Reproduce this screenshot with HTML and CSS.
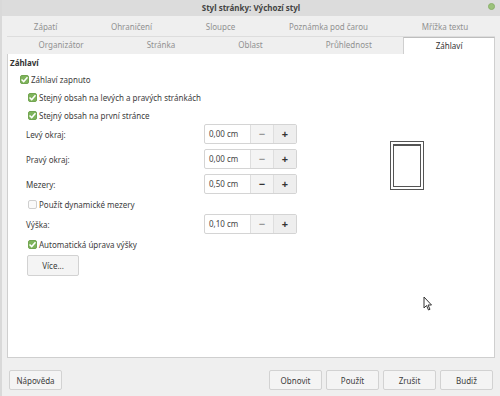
FILE: index.html
```html
<!DOCTYPE html>
<html lang="cs">
<head>
    <meta charset="UTF-8">
    <title>Styl stránky: Výchozí styl</title>
    <link rel="stylesheet" href="styles.css">
</head>
<body>
<div class="window">
    <div class="titlebar">
        Styl stránky: Výchozí styl
        <span class="close-dot"></span>
    </div>

    <div class="tabrow top">
        <div class="tab">Zápatí</div>
        <div class="tab">Ohraničení</div>
        <div class="tab">Sloupce</div>
        <div class="tab">Poznámka pod čarou</div>
        <div class="tab">Mřížka textu</div>
    </div>
    <div class="tabrow">
        <div class="tab">Organizátor</div>
        <div class="tab">Stránka</div>
        <div class="tab">Oblast</div>
        <div class="tab">Průhlednost</div>
        <div class="tab active">Záhlaví</div>
    </div>

    <div class="panel">
        <div class="form">
            <div class="heading">Záhlaví</div>

            <label class="check lvl1"><span class="box on"></span>Záhlaví zapnuto</label>
            <label class="check lvl2"><span class="box on"></span>Stejný obsah na levých a pravých stránkách</label>
            <label class="check lvl2"><span class="box on"></span>Stejný obsah na první stránce</label>

            <div class="field first">
                <span class="label">Levý okraj:</span>
                <div class="spin"><span class="value">0,00 cm</span><span class="btn minus dim">−</span><span class="btn plus">+</span></div>
            </div>
            <div class="field">
                <span class="label">Pravý okraj:</span>
                <div class="spin"><span class="value">0,00 cm</span><span class="btn minus dim">−</span><span class="btn plus">+</span></div>
            </div>
            <div class="field">
                <span class="label">Mezery:</span>
                <div class="spin"><span class="value">0,50 cm</span><span class="btn minus">−</span><span class="btn plus">+</span></div>
            </div>

            <label class="check lvl2 gap"><span class="box"></span>Použít dynamické mezery</label>

            <div class="field tight">
                <span class="label">Výška:</span>
                <div class="spin"><span class="value">0,10 cm</span><span class="btn minus dim">−</span><span class="btn plus">+</span></div>
            </div>

            <label class="check lvl2 gap"><span class="box on"></span>Automatická úprava výšky</label>

            <button class="more">Více...</button>
        </div>

        <div class="preview">
            <div class="page"><div class="page-inner"></div></div>
        </div>

        <svg class="cursor" width="10" height="15" viewBox="0 0 10 15">
            <path d="M1 1 L1 12 L3.5 9.5 L5.5 14 L7 13.3 L5 9 L8.5 9 Z" fill="#fff" stroke="#333" stroke-width="1"/>
        </svg>
    </div>

    <div class="footer">
        <button>Nápověda</button>
        <div class="actions">
            <button>Obnovit</button>
            <button>Použít</button>
            <button>Zrušit</button>
            <button>Budiž</button>
        </div>
    </div>
</div>
</body>
</html>
```

FILE: styles.css
```css
* {
    box-sizing: border-box;
}
body {
    margin: 0;
    font-family: "Noto Sans", sans-serif;
    font-size: 8px;
    color: #3c3c3c;
    background-color: #efefef;
}
.window {
    width: 500px;
    height: 396px;
    display: flex;
    flex-direction: column;
    border-left: 2px solid #d9d9d9;
}
.titlebar {
    position: relative;
    height: 16px;
    line-height: 16px;
    text-align: center;
    font-weight: bold;
    color: #444;
    background-color: #dcdcdc;
}
.close-dot {
    position: absolute;
    right: 5px;
    top: 3px;
    width: 7px;
    height: 7px;
    border-radius: 50%;
    background-color: #9bc27a;
    border: 1px solid #8ab06a;
}
.tabrow {
    display: flex;
    margin: 0 5px 0 5px;
    height: 17px;
    line-height: 16px;
}
.tabrow.top {
    height: 21px;
    line-height: 22px;
    border-bottom: 1px solid #dddddd;
}
.tab {
    flex: 1 1 auto;
    text-align: center;
    color: #919191;
}
.tab.active {
    background-color: #fff;
    color: #333;
    border: 1px solid #cfcfcf;
    border-bottom: none;
    border-top-color: #bdbdbd;
}
.panel {
    position: relative;
    flex: 1;
    display: flex;
    margin: 0 5px 0 5px;
    background-color: #fff;
    border: 1px solid #cfcfcf;
    border-top: none;
}
.form {
    width: 300px;
}
.heading {
    margin-top: 2px;
    padding-left: 2px;
    height: 14px;
    line-height: 14px;
    font-weight: bold;
    color: #333;
}
.check {
    display: flex;
    align-items: center;
    height: 18px;
}
.check.lvl1 {
    padding-left: 12px;
}
.check.lvl2 {
    padding-left: 20px;
}
.check.gap {
    margin-top: 1px;
}
.box {
    width: 9px;
    height: 9px;
    margin-right: 2px;
    border: 1px solid #cfcfcf;
    border-radius: 2px;
    background-color: #fafafa;
}
.box.on {
    border-color: #72a550;
    background: #7fb35c url("data:image/svg+xml;utf8,<svg xmlns='http://www.w3.org/2000/svg' viewBox='0 0 9 9'><path d='M1.5 4.5 L3.7 6.6 L7.5 2.2' fill='none' stroke='white' stroke-width='1.5'/></svg>") center / 9px 9px no-repeat;
}
.field {
    display: flex;
    align-items: center;
    height: 20px;
    margin-top: 5px;
    padding-left: 18px;
}
.field.first {
    margin-top: 0;
}
.field.tight {
    margin-top: 1px;
}
.label {
    width: 178px;
}
.spin {
    display: flex;
    height: 20px;
    border: 1px solid #d4d4d4;
    border-radius: 2px;
}
.spin .value {
    width: 45px;
    padding-left: 4px;
    line-height: 18px;
    color: #444;
}
.spin .btn {
    width: 23px;
    text-align: center;
    line-height: 18px;
    font-size: 11px;
    font-weight: bold;
    color: #333;
    border-left: 1px solid #dedede;
}
.spin .minus {
    background-color: #f4f4f4;
}
.spin .minus.dim {
    color: #999;
}
.spin .plus {
    background-color: #eeeeee;
}
button {
    font-family: "Noto Sans", sans-serif;
    font-size: 8px;
    color: #3c3c3c;
    background-color: #f4f4f4;
    border: 1px solid #d2d2d2;
    border-radius: 2px;
    height: 20px;
    width: 53px;
    padding: 0;
}
.more {
    margin: 2px 0 0 19px;
    width: 52px;
    height: 21px;
}
.preview {
    flex: 1;
    padding: 87px 0 0 82px;
}
.page {
    width: 34px;
    height: 49px;
    border: 1px solid #555;
    padding: 2px;
}
.page-inner {
    width: 100%;
    height: 100%;
    border: 1px solid #555;
    border-top-width: 2px;
}
.cursor {
    position: absolute;
    left: 415px;
    top: 242px;
}
.footer {
    height: 38px;
    display: flex;
    justify-content: space-between;
    align-items: flex-start;
    padding: 12px 7px 0 7px;
}
.actions {
    display: flex;
    gap: 4px;
}
```
